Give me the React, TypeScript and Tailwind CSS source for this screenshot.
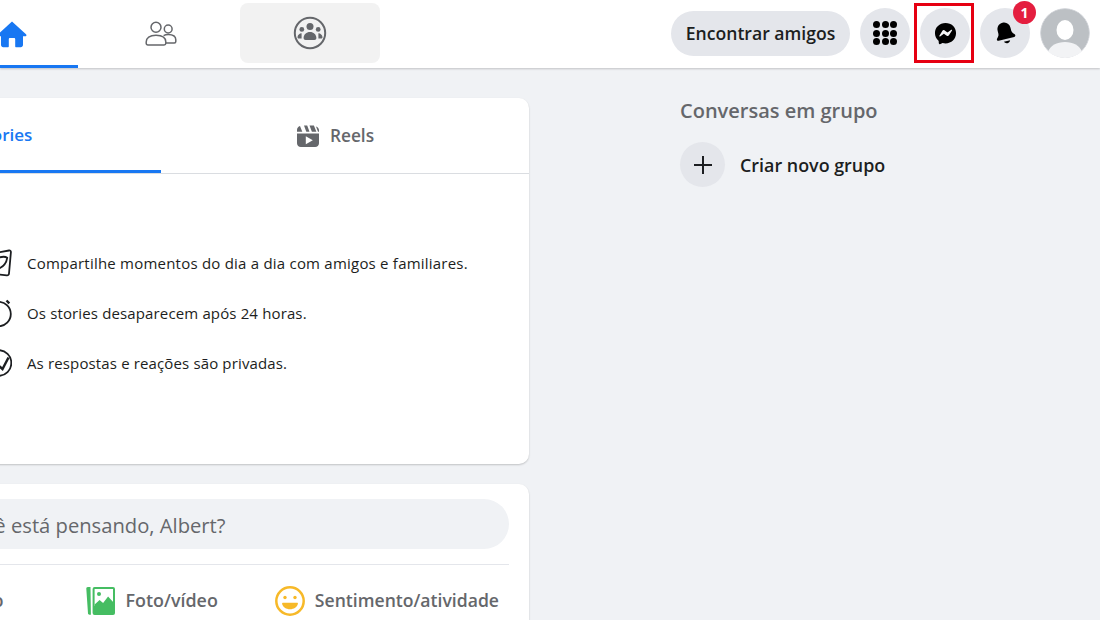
const FONT = "font-['Open_Sans','Noto_Sans',sans-serif]";

function HomeIcon() {
  return (
    <svg viewBox="0 0 30 30" className="h-[30px] w-[30px]" fill="#1877f2" aria-hidden="true">
      <path d="M15 2.600 1 15.200c-.9.900-.3 2.100.8 2.100H4v8.800c0 1.200 1 2.200 2.200 2.200h4.600c.6 0 1-.4 1-1v-7.200c0-.7.500-1.200 1.200-1.200h4c.7 0 1.200.5 1.200 1.200v7.200c0 .6.400 1 1 1h4.600c1.200 0 2.200-1 2.200-2.200v-8.800h2.200c1.100 0 1.700-1.200.8-2.100L15 2.600Z" />
    </svg>
  );
}

function FriendsIcon() {
  return (
    <svg viewBox="0 0 32 28" className="h-[28px] w-[32px]" fill="none" stroke="#65676b" strokeWidth="1.500" aria-hidden="true">
      <circle cx="11" cy="7.200" r="5" />
      <circle cx="23.200" cy="9" r="3.900" />
      <path d="M1.200 22c0-4.200 3.400-6.800 9.800-6.800s9.800 2.600 9.800 6.800v1.200c0 1-.7 1.700-1.700 1.700H2.900c-1 0-1.700-.7-1.700-1.700V22Z" />
      <path d="M18.600 15.600c1.300-.8 2.900-1.200 4.600-1.200 4.600 0 7.600 2 7.600 5.400v1.600c0 .9-.6 1.500-1.500 1.500h-8.600" />
    </svg>
  );
}

function GroupsIcon() {
  return (
    <svg viewBox="0 0 34 34" className="h-[34px] w-[34px]" aria-hidden="true">
      <circle cx="17" cy="17" r="15.200" fill="none" stroke="#65676b" strokeWidth="2" />
      <g fill="#65676b">
        <circle cx="17" cy="10.500" r="3.500" />
        <circle cx="8.800" cy="13.400" r="2.400" />
        <circle cx="25.200" cy="13.400" r="2.400" />
        <path d="M10.600 22c0-3.400 2.800-6 6.400-6s6.400 2.600 6.400 6c0 1.200-.8 2-2 2h-8.800c-1.200 0-2-.8-2-2Z" />
        <path d="M8.600 17.200c-2.200.2-3.800 1.600-4.100 3.700-.1.900.6 1.600 1.500 1.600h2.600c-.1-1.900.1-3.600 0-5.300Z" />
        <path d="M25.400 17.200c2.200.2 3.800 1.600 4.100 3.700.1.900-.6 1.600-1.500 1.600h-2.600c.1-1.900-.1-3.600 0-5.300Z" />
      </g>
    </svg>
  );
}

function GridIcon() {
  const dots = [0, 1, 2, 3, 4, 5, 6, 7, 8];
  return (
    <div className="grid grid-cols-3 gap-[1.500px]">
      {dots.map((d) => (
        <span key={d} className="h-[7px] w-[7px] rounded-full bg-black" />
      ))}
    </div>
  );
}

function MessengerIcon() {
  return (
    <svg viewBox="0 0 24 24" className="h-[23px] w-[23px]" aria-hidden="true">
      <path d="M12 1C5.800 1 1 5.500 1 11.600c0 3.200 1.300 5.900 3.500 7.800.4.300.4.600.4 1l.1 1.900c0 .6.600 1 1.200.8l2.200-1c.2-.1.400-.1.600-.1 1 .3 2 .4 3 .4 6.200 0 11-4.500 11-10.800S18.200 1 12 1Z" fill="#000" />
      <path d="M5.600 14.300 8.800 9.200c.5-.8 1.600-1 2.300-.4l2.600 1.900c.2.200.5.200.8 0l3.500-2.600c.5-.4 1.100.2.800.7l-3.200 5.100c-.5.800-1.600 1-2.300.4l-2.600-1.900c-.2-.2-.5-.2-.8 0l-3.500 2.600c-.5.400-1.100-.2-.8-.7Z" fill="#f5f6f7" />
    </svg>
  );
}

function BellIcon() {
  return (
    <svg viewBox="0 0 22 24" className="h-[24px] w-[22px]" fill="#000" aria-hidden="true">
      <g transform="rotate(-14 11 12)">
        <path d="M11 1.500c-4 0-6.600 3-6.600 6.800v3.100c0 1-.5 1.900-1.200 2.700l-1.300 1.500c-.9 1-.2 2.400 1.100 2.400h16c1.300 0 2-1.400 1.100-2.400l-1.300-1.500c-.7-.8-1.200-1.700-1.200-2.700V8.300c0-3.800-2.600-6.800-6.600-6.800Z" />
        <path d="M7.800 20.300h6.400c-.4 1.300-1.700 2.200-3.200 2.200s-2.800-.9-3.200-2.200Z" />
      </g>
    </svg>
  );
}

function Avatar() {
  return (
    <svg viewBox="0 0 50 50" className="h-[50px] w-[50px] rounded-full" aria-hidden="true">
      <circle cx="25" cy="25" r="24.500" fill="#bcc0c4" stroke="#d8dadf" />
      <ellipse cx="25" cy="22" rx="8.500" ry="10" fill="#fff" />
      <path d="M8 44c2-6.500 9-10 17-10s15 3.500 17 10c-4.500 4-10.500 6-17 6S12.500 48 8 44Z" fill="#f2f3f5" />
    </svg>
  );
}

function ReelsIcon() {
  return (
    <svg viewBox="0 0 24 24" className="h-[24px] w-[24px]" fill="#65676b" aria-hidden="true">
      <path d="M1 9.500h22v9.800c0 2.300-1.700 3.700-3.800 3.700H4.800C2.700 23 1 21.600 1 19.300V9.500Zm8.800 2.700v8l7-4-7-4Z" fillRule="evenodd" />
      <path d="M1 7.800V6c0-2 1.300-3.600 3-4l2.300 5.800H1ZM8 1.500h3.200l2.300 6.300H10.300L8 1.500ZM13.500 1.500h3.400c.4 0 .7 0 1 .1l2.500 6.200h-4.500l-2.400-6.300ZM20 2.400C21.800 3 23 4.400 23 6.200v1.600h-1L20 2.400Z" />
    </svg>
  );
}

function PhotoIcon() {
  return (
    <svg viewBox="0 0 30 30" className="h-[30px] w-[30px]" aria-hidden="true">
      <path d="M4.500 1H1.800C.9 1 .2 1.800.3 2.700L2 27.500c.1.800.6 1.200 1.400 1.200h1.500L4.500 1Z" fill="#45bd62" />
      <rect x="6.600" y="1" width="22.400" height="28" rx="2" fill="#45bd62" />
      <rect x="8.600" y="3" width="18.400" height="17" fill="#fff" />
      <circle cx="13" cy="8" r="2" fill="#45bd62" />
      <path d="M8.600 18.500l5-4.500 3.500 3 5-6.500 5 5.500V24H8.600Z" fill="#45bd62" />
    </svg>
  );
}

function SmileIcon() {
  return (
    <svg viewBox="0 0 30 30" className="h-[30px] w-[30px]" aria-hidden="true">
      <circle cx="15" cy="15" r="13.700" fill="#fff" stroke="#f7b928" strokeWidth="2.500" />
      <circle cx="10" cy="11.500" r="1.700" fill="#f7b928" />
      <circle cx="20" cy="11.500" r="1.700" fill="#f7b928" />
      <path d="M7.800 16.800h14.400c.5 0 .8.400.7.900-.7 3.300-4 5.500-7.900 5.500s-7.200-2.200-7.900-5.500c-.1-.5.200-.9.700-.9Z" fill="#f7b928" />
    </svg>
  );
}

// these three are cut by the left edge of the window, only their right part shows
function PictureCheckIcon() {
  return (
    <svg viewBox="0 0 28 28" className="h-[28px] w-[28px] shrink-0" fill="none" stroke="#1c1e21" strokeWidth="1.800" aria-hidden="true">
      <path d="M2 5.500 25 1.500c1.200-.2 2 .5 1.900 1.700L25 24.500c-.1 1.200-.9 2-2.100 1.900L2 24" />
      <path d="M15 8.500c3-.9 6.600-.9 8.200.3-.7 4.500-3.200 8.400-8 10.700" />
    </svg>
  );
}

function TimerIcon() {
  return (
    <svg viewBox="0 0 28 28" className="h-[28px] w-[28px] shrink-0" fill="none" stroke="#1c1e21" strokeWidth="1.800" aria-hidden="true">
      <circle cx="14.500" cy="15" r="12.300" />
      <path d="M22.500 1.500l2.800 2.800" strokeWidth="2.400" />
    </svg>
  );
}

function CheckIcon() {
  return (
    <svg viewBox="0 0 28 28" className="h-[28px] w-[28px] shrink-0" fill="none" stroke="#1c1e21" strokeWidth="1.800" aria-hidden="true">
      <circle cx="14.500" cy="14" r="12.800" />
      <path d="M12 14.500l6.500 5.500 6-11.500" strokeWidth="2.400" />
    </svg>
  );
}

function RoundButton({ children }: { children: React.ReactNode }) {
  return (
    <div className="flex h-[50px] w-[50px] items-center justify-center rounded-full bg-[#e4e6eb]">
      {children}
    </div>
  );
}

function InfoRow({ icon, text, spacing }: { icon: React.ReactNode; text: string; spacing: string }) {
  return (
    <div className="flex h-[50px] items-center gap-[15px]">
      <div className="flex w-[24px] justify-end">{icon}</div>
      <span className={`text-[15px] text-[#1c1e21] ${spacing}`}>{text}</span>
    </div>
  );
}

export default function App() {
  return (
    <div className={`flex h-[620px] w-[1100px] flex-col overflow-hidden bg-[#f0f2f5] ${FONT}`}>
      <header className="z-10 flex h-[68px] shrink-0 items-stretch bg-white pr-[10px] shadow-[0_1px_2px_rgba(0,0,0,0.2)]">
        <nav className="ml-[-54px] flex">
          <div className="flex h-[68px] w-[132px] items-center justify-center border-b-[3px] border-[#1877f2] pt-[2px]">
            <HomeIcon />
          </div>
          <div className="ml-[12px] flex h-[68px] w-[140px] items-center justify-center pl-[2px] pb-[1px]">
            <FriendsIcon />
          </div>
          <div className="ml-[10px] mt-[3px] flex h-[60px] w-[140px] items-center justify-center rounded-lg bg-[#f2f2f2]">
            <GroupsIcon />
          </div>
        </nav>
        <div className="ml-auto flex items-center gap-[10px] pb-[2px]">
          <div className="flex h-[45px] w-[179px] items-center justify-center rounded-full bg-[#e4e6eb] text-[17.600px] font-semibold text-[#1c1e21]">
            Encontrar amigos
          </div>
          <RoundButton>
            <GridIcon />
          </RoundButton>
          <div className="relative">
            <RoundButton>
              <MessengerIcon />
            </RoundButton>
            <div className="absolute left-[-6px] top-[-5px] h-[60px] w-[60px] border-[3px] border-[#e60012]" />
          </div>
          <div className="relative">
            <RoundButton>
              <BellIcon />
            </RoundButton>
            <span className="absolute left-[33px] top-[-7px] flex h-[23px] w-[23px] items-center justify-center rounded-full bg-[#e41e3f] text-[14px] font-bold text-white">
              1
            </span>
          </div>
          <Avatar />
        </div>
      </header>

      <main className="flex min-h-0 flex-1 pt-[30px]">
        <div className="ml-[-169px] flex w-[698px] shrink-0 flex-col gap-[20px]">
          <section className="h-[366px] shrink-0 rounded-[10px] bg-white shadow-[0_1px_2px_rgba(0,0,0,0.2)]">
            <div className="flex h-[76px] border-b border-[#dadde1] px-[20px]">
              <div className="flex w-[310px] items-center justify-center border-b-[3px] border-[#1877f2] pt-[2px] pr-[4px] text-[17px] font-semibold text-[#1877f2]">
                Stories
              </div>
              <div className="flex w-[348px] items-center justify-center gap-[10px] text-[17.300px] font-semibold text-[#65676b]">
                <ReelsIcon />
                Reels
              </div>
            </div>
            <div className="pl-[157px] pt-[64px]">
              <InfoRow icon={<PictureCheckIcon />} spacing="tracking-[0.22px]" text="Compartilhe momentos do dia a dia com amigos e familiares." />
              <InfoRow icon={<TimerIcon />} spacing="tracking-[0.14px]" text="Os stories desaparecem após 24 horas." />
              <InfoRow icon={<CheckIcon />} spacing="tracking-[0.14px]" text="As respostas e reações são privadas." />
            </div>
          </section>

          <section className="h-[200px] shrink-0 rounded-t-[10px] bg-white px-[20px] pt-[15px] shadow-[0_1px_2px_rgba(0,0,0,0.2)]">
            <div className="flex h-[50px] items-center rounded-full bg-[#f0f2f5] pl-[35px] pt-[2px] text-[20.200px] text-[#65676b]">
              Em que você está pensando, Albert?
            </div>
            <div className="mt-[15px] flex h-[72px] items-center justify-end border-t border-[#e4e6eb] pr-[10px] text-[17.600px] font-semibold text-[#65676b]">
              <div className="flex items-center gap-[10px]">
                <span>Vídeo ao vivo</span>
              </div>
              <div className="ml-[82px] flex items-center gap-[10px]">
                <PhotoIcon />
                <span className="text-[17.900px]">Foto/vídeo</span>
              </div>
              <div className="ml-[57px] flex items-center gap-[10px]">
                <SmileIcon />
                <span>Sentimento/atividade</span>
              </div>
            </div>
          </section>
        </div>

        <aside className="ml-[151px] w-[300px]">
          <h2 className="text-[20px] font-semibold leading-[26px] text-[#65676b]">Conversas em grupo</h2>
          <div className="mt-[18px] flex items-center gap-[15px]">
            <div className="flex h-[45px] w-[45px] items-center justify-center rounded-full bg-[#e4e6eb]">
              <svg viewBox="0 0 20 20" className="h-[20px] w-[20px]" stroke="#1c1e21" strokeWidth="2" aria-hidden="true">
                <path d="M10 1v18M1 10h18" />
              </svg>
            </div>
            <span className="pt-[1px] text-[17.900px] font-semibold text-[#1c1e21]">Criar novo grupo</span>
          </div>
        </aside>
      </main>
    </div>
  );
}
